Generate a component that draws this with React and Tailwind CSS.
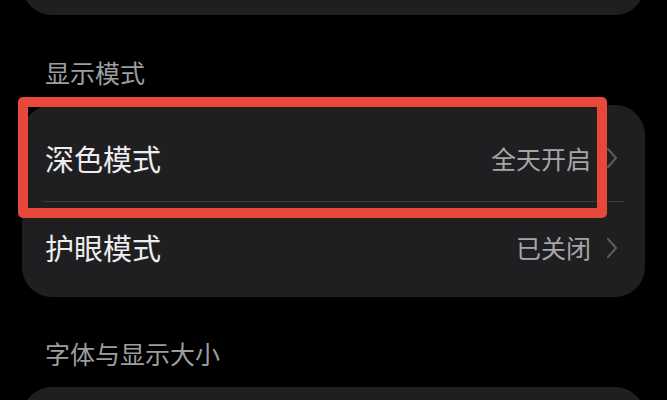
import React from "react";

function Chevron() {
  return (
    <svg width="12" height="22" viewBox="0 0 12 22" className="shrink-0">
      <polyline points="2,2 10,11 2,20" fill="none" stroke="#5c5c5e" strokeWidth="2" strokeLinecap="round" strokeLinejoin="round" />
    </svg>
  );
}

export default function App() {
  const font = { fontFamily: '"Noto Sans CJK SC", "Noto Sans", sans-serif' };
  return (
    <div className="w-[667px] h-[400px] bg-black overflow-hidden flex flex-col px-[22px]" style={font}>
      <div className="h-[60px] mt-[-45px] rounded-b-[30px] bg-[#1f1f21] shrink-0" />
      <div className="pt-[45px] pb-[20px] pl-[23px] text-[25px] leading-[25px] text-[#9d9d9f] shrink-0">显示模式</div>
      <div className="relative rounded-[30px] bg-[#1f1f21] shrink-0">
        <div className="h-[96px] pt-[10px] flex items-center pl-[23px] pr-[27px]">
          <span className="text-[29px] leading-[29px] text-[#ededed]">深色模式</span>
          <span className="ml-auto text-[25px] leading-[25px] text-[#a6a6a8]">全天开启</span>
          <span className="ml-[15px] flex"><Chevron /></span>
        </div>
        <div className="mx-[21px] h-px bg-[#3a3a3c]" />
        <div className="h-[95px] pb-[4px] flex items-center pl-[23px] pr-[27px]">
          <span className="text-[29px] leading-[29px] text-[#ededed]">护眼模式</span>
          <span className="ml-auto text-[25px] leading-[25px] text-[#a6a6a8]">已关闭</span>
          <span className="ml-[15px] flex"><Chevron /></span>
        </div>
        <div className="absolute left-[-4px] top-[-8px] w-[589px] h-[121px] border-[10px] border-[#e8473b] rounded-[5px] pointer-events-none" />
      </div>
      <div className="pt-[44px] pb-[21px] pl-[23px] text-[25px] leading-[25px] text-[#9d9d9f] shrink-0">字体与显示大小</div>
      <div className="h-[100px] rounded-[30px] bg-[#1f1f21] shrink-0" />
    </div>
  );
}
